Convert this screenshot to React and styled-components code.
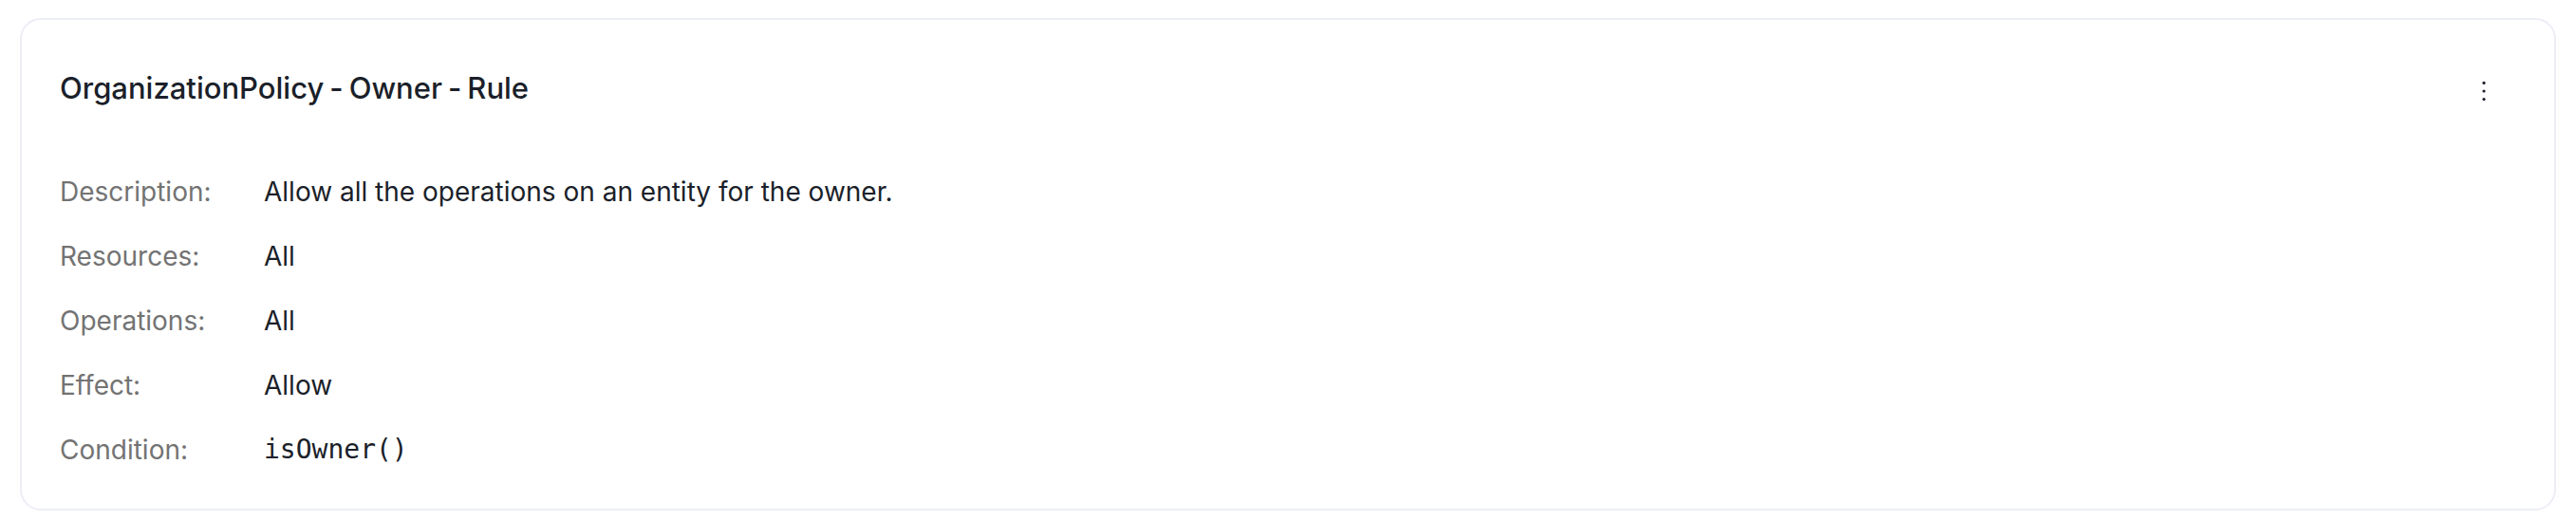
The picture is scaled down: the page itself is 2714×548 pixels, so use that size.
import styled, { createGlobalStyle } from "styled-components";

const GlobalStyle = createGlobalStyle`
  html, body {
    margin: 0;
    padding: 0;
    background: #ffffff;
  }
  body {
    font-family: Inter, "Noto Sans", sans-serif;
    -webkit-font-smoothing: antialiased;
  }
`;

const Page = styled.div`
  padding: 19px 21px 11px;
`;

const Card = styled.section`
  background: #ffffff;
  border: 2px solid #eceef5;
  border-radius: 22px;
  padding: 40px 38px 42px 40px;
`;

const CardHeader = styled.header`
  display: flex;
  align-items: center;
  justify-content: space-between;
  height: 62px;
`;

const Title = styled.h2`
  margin: 2px 0 0;
  font-size: 31px;
  line-height: 40px;
  font-weight: 500;
  color: #1b1f2a;
`;

const Hyphen = styled.span`
  margin: 0 6px;
`;

const MenuButton = styled.button`
  display: flex;
  align-items: center;
  justify-content: center;
  width: 40px;
  height: 40px;
  margin: 8px 16px 0 0;
  padding: 0;
  border: none;
  background: transparent;
  color: #1b1f2a;
  cursor: pointer;
`;

const Details = styled.dl`
  display: flex;
  flex-direction: column;
  gap: 28px;
  margin: 59px 0 0;
`;

const Row = styled.div`
  display: grid;
  grid-template-columns: 215px 1fr;
  line-height: 40px;
  font-size: 28px;
`;

const Label = styled.dt`
  color: #737373;
`;

const Value = styled.dd`
  margin: 0;
  color: #1b1f2a;
  font-family: ${(p) =>
    p.$code ? `"DejaVu Sans Mono", "Liberation Mono", monospace` : "inherit"};
`;

function KebabIcon() {
  return (
    <svg width="6" height="24" viewBox="0 0 6 24" fill="currentColor">
      <circle cx="3" cy="3.4" r="1.6" />
      <circle cx="3" cy="12" r="1.6" />
      <circle cx="3" cy="20.6" r="1.6" />
    </svg>
  );
}

const rule = {
  name: "OrganizationPolicy-Owner-Rule",
  fields: [
    { label: "Description:", value: "Allow all the operations on an entity for the owner." },
    { label: "Resources:", value: "All" },
    { label: "Operations:", value: "All" },
    { label: "Effect:", value: "Allow" },
    { label: "Condition:", value: "isOwner()", code: true },
  ],
};

function RuleName({ name }) {
  const parts = name.split("-");
  return parts.map((part, i) => (
    <span key={i}>
      {i > 0 && <Hyphen>-</Hyphen>}
      {part}
    </span>
  ));
}

export default function App() {
  return (
    <>
      <GlobalStyle />
      <Page>
        <Card>
          <CardHeader>
            <Title>
              <RuleName name={rule.name} />
            </Title>
            <MenuButton aria-label="More actions">
              <KebabIcon />
            </MenuButton>
          </CardHeader>
          <Details>
            {rule.fields.map((f) => (
              <Row key={f.label}>
                <Label>{f.label}</Label>
                <Value $code={f.code}>{f.value}</Value>
              </Row>
            ))}
          </Details>
        </Card>
      </Page>
    </>
  );
}
